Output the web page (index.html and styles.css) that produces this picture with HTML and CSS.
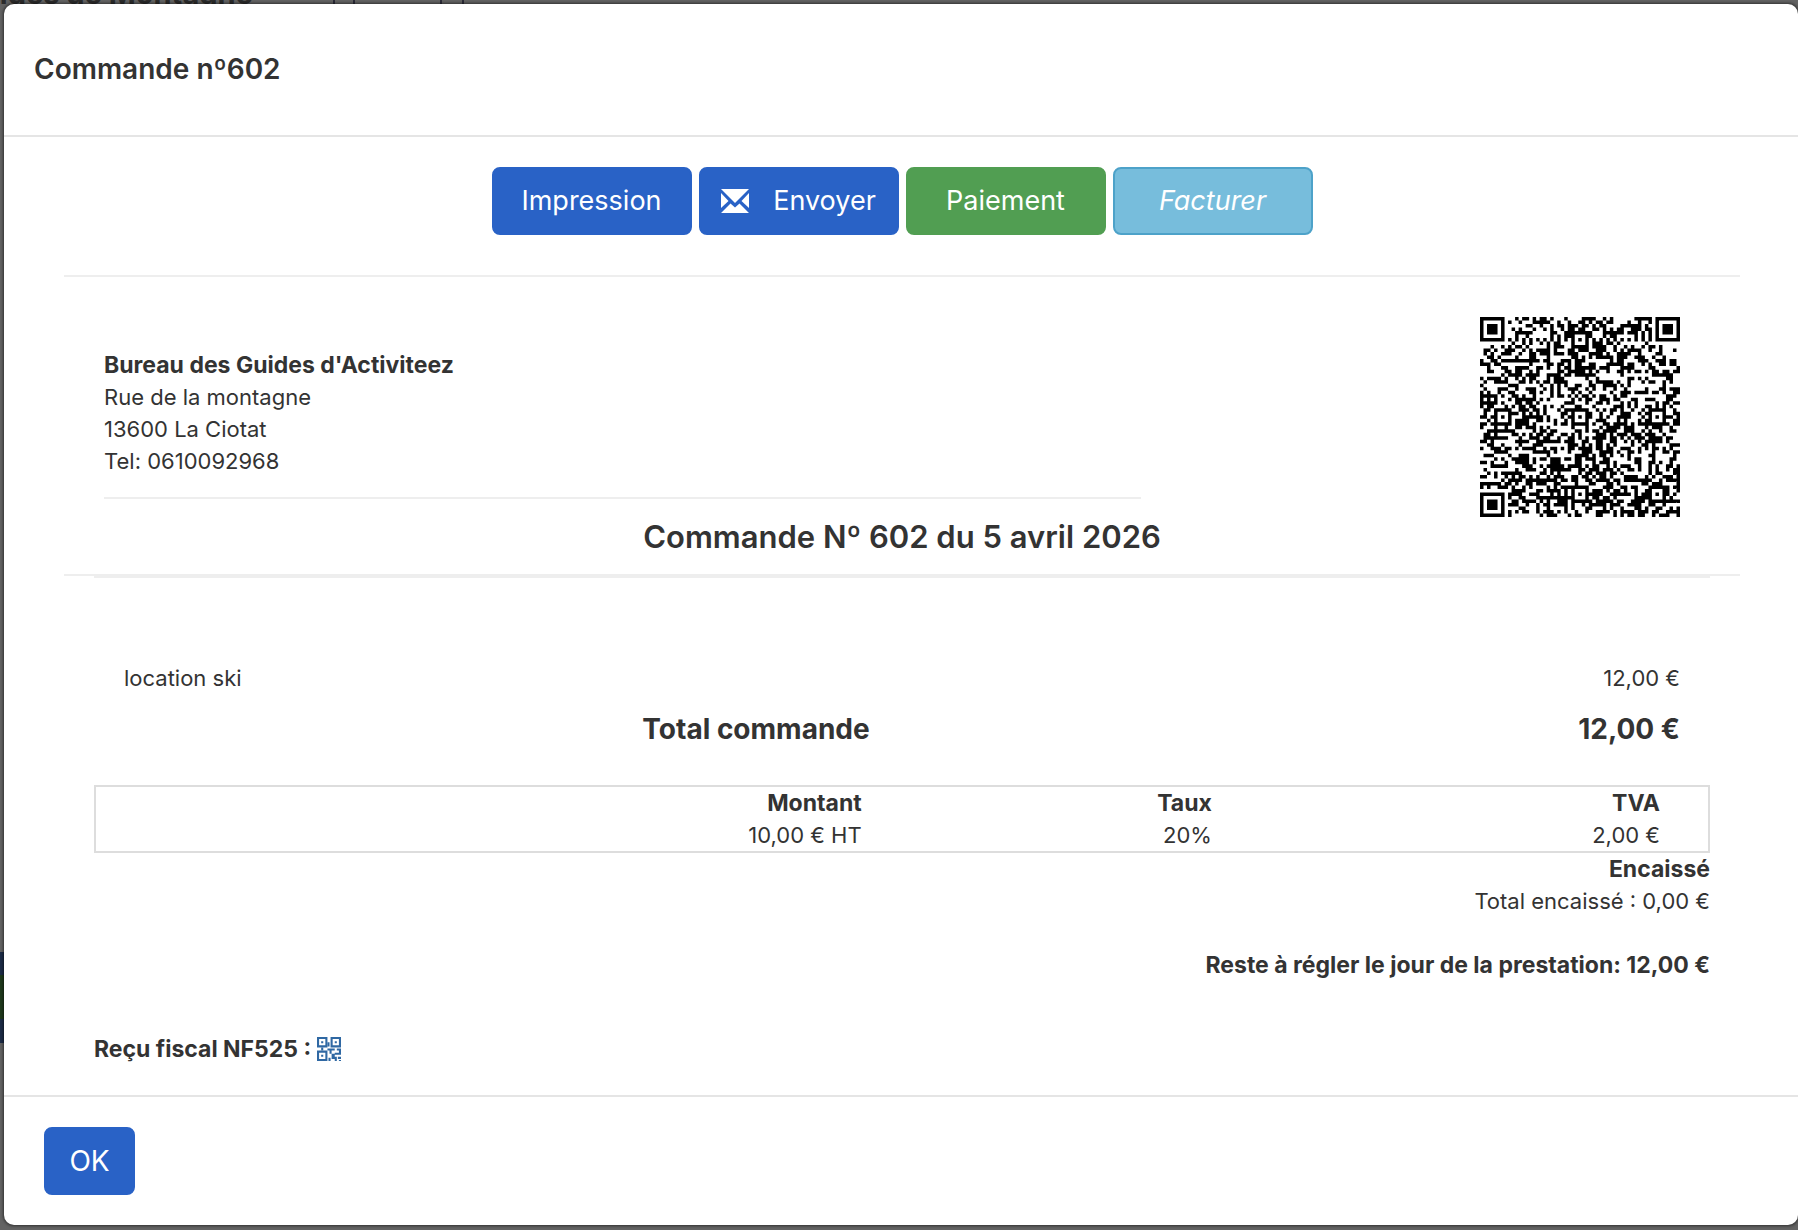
FILE: index.html
```
<!DOCTYPE html>
<html lang="fr">
<head>
    <meta charset="UTF-8">
    <meta name="viewport" content="width=device-width, initial-scale=1.0">
    <title>Commande n°602</title>
    <link rel="stylesheet" href="styles.css">
</head>
<body>
    <!-- Page derrière la fenêtre -->
    <div class="page-behind" aria-hidden="true">
        <div class="behind-title">Guides de Montagne</div>
        <div class="behind-box box-edit"></div>
        <div class="behind-box box-add"></div>
        <div class="behind-block"></div>
    </div>

    <div class="modal" role="dialog" aria-labelledby="modalTitle">
        <div class="modal-header">
            <h1 id="modalTitle">Commande nº602</h1>
        </div>

        <div class="modal-body">
            <div class="actions">
                <button type="button" class="btn btn-primary">Impression</button>
                <button type="button" class="btn btn-primary btn-icon">
                    <svg class="icon-mail" viewBox="0 0 28 24" aria-hidden="true">
                        <path d="M0 0h28L14 14z"/>
                        <path d="M0 4l7.500 8L0 19z"/>
                        <path d="M28 4l-7.500 8L28 19z"/>
                        <path d="M0 24l9.500-9.500L14 18.500l4.500-4L28 24z"/>
                    </svg>
                    Envoyer
                </button>
                <button type="button" class="btn btn-success">Paiement</button>
                <button type="button" class="btn btn-info">Facturer</button>
            </div>

            <div class="order-head">
                <div class="company">
                    <address>
                        <strong>Bureau des Guides d'Activiteez</strong><br>
                        Rue de la montagne<br>
                        13600 La Ciotat<br>
                        Tel: 0610092968
                    </address>
                </div>
                <svg id="qrCode" class="qr-code" viewBox="0 0 57 57" role="img" aria-label="QR code"></svg>
                <h2>Commande Nº 602 du 5 avril 2026</h2>
            </div>

            <div class="order">
                <table class="lines">
                    <tr>
                        <td>location ski</td>
                        <td class="price">12,00 €</td>
                    </tr>
                    <tr class="total">
                        <th scope="row">Total commande</th>
                        <td class="price">12,00 €</td>
                    </tr>
                </table>

                <table class="taxes">
                    <tr>
                        <th class="col-amount">Montant</th>
                        <th class="col-rate">Taux</th>
                        <th class="col-vat">TVA</th>
                    </tr>
                    <tr>
                        <td>10,00 € HT</td>
                        <td>20%</td>
                        <td class="col-vat">2,00 €</td>
                    </tr>
                </table>

                <div class="payments">
                    <strong>Encaissé</strong><br>
                    Total encaissé : 0,00 €
                    <p><strong>Reste à régler le jour de la prestation: 12,00 €</strong></p>
                </div>

                <div class="receipt">
                    <strong>Reçu fiscal NF525 :</strong>
                    <a href="#" aria-label="Reçu fiscal">
                        <svg class="icon-qr" viewBox="0 0 23 23" aria-hidden="true">
                            <path fill-rule="evenodd" d="M0 0h10v10H0zM2 2v6h6V2zM13 0h10v10H13zM15 2v6h6V2zM0 13h10v10H0zM2 15v6h6v-6z"/>
                            <path d="M4 4h2v2H4zM17 4h2v2h-2zM4 17h2v2H4zM10 5h2v4h-2zM4 10h2v3H4zM10 11h7v2h-3v3h-2v-3h-2zM19 11h4v6h-6v-2h4v-2h-2zM14 16h3v3h2v4h-2v-2h-3zM11 20h2v3h-2zM20 19h3v2h-3zM21 22h2v1h-2z"/>
                        </svg>
                    </a>
                </div>
            </div>
        </div>

        <div class="modal-footer">
            <button type="button" class="btn btn-primary btn-ok">OK</button>
        </div>
    </div>

    <script src="qr.js"></script>
</body>
</html>
```
FILE: styles.css
```
* {
    box-sizing: border-box;
}
body {
    margin: 0;
    padding: 4px 0 5px 4px;
    min-height: 100vh;
    background-color: #636363;
    font-family: Inter, "Liberation Sans", sans-serif;
    font-size: 22px;
    line-height: 32px;
    color: #333;
}
/* page derrière la fenêtre */
.page-behind {
    position: absolute;
    top: 0;
    left: 0;
    width: 100%;
    height: 100%;
    overflow: hidden;
}
.behind-title {
    position: absolute;
    top: -22px;
    left: -40px;
    font-size: 29px;
    font-weight: bold;
    color: #2b2b2b;
}
.behind-box {
    position: absolute;
    top: -20px;
    height: 30px;
    border: 2px solid #2b2b38;
}
.box-edit {
    left: 333px;
    width: 22px;
}
.box-add {
    left: 440px;
    width: 24px;
}
.behind-block {
    position: absolute;
    top: 952px;
    left: 0;
    width: 4px;
    height: 91px;
    background-color: #1f3a1c;
    border: solid #1c2c47;
    border-width: 23px 0 24px;
}
/* fenêtre */
.modal {
    position: relative;
    background-color: #fff;
    border-radius: 10px;
    box-shadow: 0 0 3px 1px rgba(0, 0, 0, 0.5);
}
.modal-header {
    padding: 45px 30px 46px;
    border-bottom: 2px solid #e5e5e5;
}
h1 {
    margin: 0;
    font-size: 28px;
    line-height: 40px;
    font-weight: 600;
}
.modal-body {
    padding: 30px 58px 30px 60px;
}
.actions {
    display: flex;
    justify-content: center;
    gap: 7px;
    padding-bottom: 40px;
    border-bottom: 2px solid #eee;
}
.btn {
    width: 200px;
    height: 68px;
    padding: 0;
    border: 2px solid transparent;
    border-radius: 8px;
    font-family: inherit;
    font-size: 28px;
    line-height: 40px;
    color: #fff;
    cursor: pointer;
}
.btn-primary {
    background-color: #2962c6;
    border-color: #2962c6;
}
.btn-success {
    background-color: #519e52;
    border-color: #519e52;
}
.btn-info {
    background-color: #77bddc;
    border-color: #4da2c9;
    font-style: italic;
}
.actions .btn {
    font-size: 27px;
}
.btn-icon {
    display: flex;
    align-items: center;
    justify-content: center;
    gap: 24px;
}
.icon-mail {
    width: 28px;
    height: 24px;
    fill: #fff;
}
.order-head {
    display: grid;
    grid-template-columns: 1fr auto;
    padding: 40px 60px 0 40px;
    border-bottom: 2px solid #eee;
}
.company {
    margin-right: 339px;
    padding: 32px 0 20px;
    align-self: start;
    border-bottom: 2px solid #eee;
}
address {
    font-style: normal;
}
strong,
th {
    font-size: 23px;
}
.qr-code {
    width: 200px;
    height: 200px;
}
h2 {
    grid-column: 1 / -1;
    margin: 0 -20px 17px 0;
    font-size: 31px;
    line-height: 40px;
    font-weight: 600;
    text-align: center;
}
.order {
    margin: 0 30px;
    border-top: 2px solid #eee;
}
table {
    width: 100%;
    border-collapse: collapse;
    table-layout: fixed;
}
th,
td {
    padding: 0;
    text-align: right;
}
.lines {
    margin-top: 84px;
}
.lines td:first-child {
    width: 48%;
    padding-left: 30px;
    text-align: left;
}
.lines .price {
    padding-right: 30px;
}
.total th,
.total td {
    padding-top: 15px;
    font-size: 28px;
    line-height: 40px;
    font-weight: bold;
}
.taxes {
    margin-top: 36px;
    border: 2px solid #ddd;
}
.col-amount {
    width: 47.5%;
}
.col-rate {
    width: 21.7%;
}
.col-vat {
    padding-right: 48px;
}
.payments {
    text-align: right;
}
.payments p {
    margin: 32px 0 0;
}
.receipt {
    display: flex;
    align-items: center;
    gap: 6px;
    margin-top: 52px;
}
.receipt a {
    display: flex;
}
.icon-qr {
    width: 24px;
    height: 24px;
    fill: #2f68a3;
}
.modal-footer {
    padding: 30px 40px;
    border-top: 2px solid #e5e5e5;
}
.btn-ok {
    display: block;
    width: 91px;
}
```
FILE: qr.js
```
const SIZE = 57;
const CENTERS = [6, 28, 50];
let seed = 602;

function randomBit() {
    seed = (seed * 1103515245 + 12345) % 2147483648;
    return seed > 1073741824;
}

// anneaux carrés autour d'un centre
function ring(x, y, cx, cy) {
    return Math.max(Math.abs(x - cx), Math.abs(y - cy));
}

function isDark(x, y) {
    const data = randomBit();
    for (const [cx, cy] of [[3, 3], [SIZE - 4, 3], [3, SIZE - 4]]) {
        const r = ring(x, y, cx, cy);
        if (r <= 4) return r !== 2 && r !== 4;
    }
    for (const cx of CENTERS) {
        for (const cy of CENTERS) {
            const corner = (cx === 6 && cy !== 28) || (cy === 6 && cx === 50);
            const r = ring(x, y, cx, cy);
            if (!corner && r <= 2) return r !== 1;
        }
    }
    if (x === 6 || y === 6) return (x + y) % 2 === 0;
    return data;
}

let d = "";
for (let y = 0; y < SIZE; y++) {
    for (let x = 0; x < SIZE; x++) {
        if (isDark(x, y)) d += `M${x} ${y}h1v1h-1z`;
    }
}
const path = document.createElementNS("http://www.w3.org/2000/svg", "path");
path.setAttribute("d", d);
document.getElementById("qrCode").appendChild(path);
```
